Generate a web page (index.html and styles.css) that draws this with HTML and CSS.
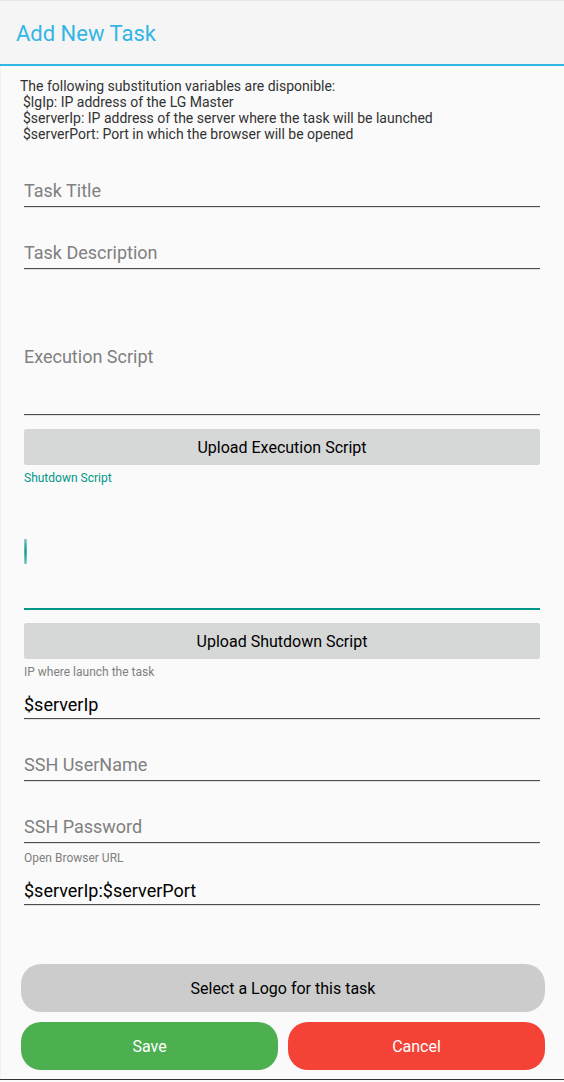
FILE: index.html
```html
<!DOCTYPE html>
<html lang="en">
<head>
<meta charset="utf-8">
<meta name="viewport" content="width=device-width, initial-scale=1">
<title>Add New Task</title>
<link rel="stylesheet" href="styles.css">
</head>
<body>
<main class="dialog">
<header class="dialog-header"><h1 class="dialog-title">Add New Task</h1></header>
<form class="task-form">
<div class="notes">
<p class="note">The following substitution variables are disponible:</p>
<p class="note note-item">$lgIp: IP address of the LG Master</p>
<p class="note note-item">$serverIp: IP address of the server where the task will be launched</p>
<p class="note note-item">$serverPort: Port in which the browser will be opened</p>
</div>
<div class="fields">
<div class="field"><input class="input" type="text" aria-label="Task Title" placeholder="Task Title"></div>
<div class="field"><input class="input" type="text" aria-label="Task Description" placeholder="Task Description"></div>
<div class="field field-script"><input class="input input-tall" type="text" aria-label="Execution Script" placeholder="Execution Script"></div>
<button class="upload" type="button">Upload Execution Script</button>
<div class="field field-active"><label class="label" for="shutdown">Shutdown Script</label><div class="script-box"><span class="caret"></span><input class="input input-tall" id="shutdown" type="text"></div></div>
<button class="upload" type="button">Upload Shutdown Script</button>
<div class="field field-ip"><label class="label" for="ip">IP where launch the task</label><input class="input input-value" id="ip" type="text" value="$serverIp"></div>
<div class="field"><input class="input" type="text" aria-label="SSH UserName" placeholder="SSH UserName"></div>
<div class="field"><input class="input" type="password" aria-label="SSH Password" placeholder="SSH Password"></div>
<div class="field"><label class="label" for="url">Open Browser URL</label><input class="input input-value" id="url" type="text" value="$serverIp:$serverPort"></div>
</div>
<div class="actions">
<button class="pill pill-logo" type="button">Select a Logo for this task</button>
<button class="pill pill-save" type="submit">Save</button>
<button class="pill pill-cancel" type="button">Cancel</button>
</div>
</form>
</main>
</body>
</html>
```

FILE: styles.css
```css
* { box-sizing: border-box; }
body { margin: 0; background: #fafafa; color: #000; font-family: Roboto, "Liberation Sans", sans-serif; }
.dialog { border-bottom: 1px solid #333; }
.dialog-header { display: flex; align-items: center; height: 66px; padding: 2px 16px 0; background: #f5f5f5; border-top: 1px solid #e6e6e6; border-bottom: 2px solid #33b5e5; }
.dialog-title { margin: 0; font-size: 22px; font-weight: 400; color: #33b5e5; }
.task-form { padding: 12px 19px 9px; border-left: 1px solid #f2f2f2; }
.note { margin: 0; font-size: 14px; line-height: 16px; color: #323232; }
.note-item { padding-left: 3px; }
.fields { display: flex; flex-direction: column; padding: 4px 5px 0 4px; }
.field { display: flex; flex-direction: column; justify-content: flex-end; height: 62px; padding-bottom: 1px; }
.field-script { height: 146px; }
.field-active { height: 145px; padding-bottom: 0; }
.field-ip { height: 61px; }
.input { display: block; width: 100%; height: 32px; margin: 0; padding: 0; border: 0; border-bottom: 1px solid #4d4d4d; border-radius: 0; outline: 0; box-shadow: 0 1px #e0e0e0; background: transparent; color: #000; font: inherit; font-size: 18px; }
.input::placeholder { color: #808080; opacity: 1; }
.input-value { padding-top: 4px; }
.input-tall { height: 116px; }
.label { margin-bottom: 7px; font-size: 12px; line-height: 16px; color: #808080; }
.field-active .label { margin-bottom: 8px; color: #009688; }
.field-active .input { border-bottom: 2px solid #009688; box-shadow: none; }
.script-box { position: relative; }
.caret { position: absolute; left: 0; top: 45px; width: 3px; height: 25px; background: radial-gradient(ellipse 2px 18px at center, #009688, #b5dedb); }
.upload { flex: none; height: 36px; margin: 13px 0 0; border: 0; border-radius: 2px; background: #d6d7d7; color: #000; font: inherit; font-size: 16px; }
.actions { display: grid; grid-template-columns: 1fr 1fr; gap: 10px; padding: 58px 0 0 1px; }
.pill { height: 48px; border: 0; border-radius: 20px; color: #fff; font: inherit; font-size: 16px; }
.pill-logo { grid-column: 1 / -1; background: #ccc; color: #000; }
.pill-save { background: #4caf50; }
.pill-cancel { background: #f44336; }
```
